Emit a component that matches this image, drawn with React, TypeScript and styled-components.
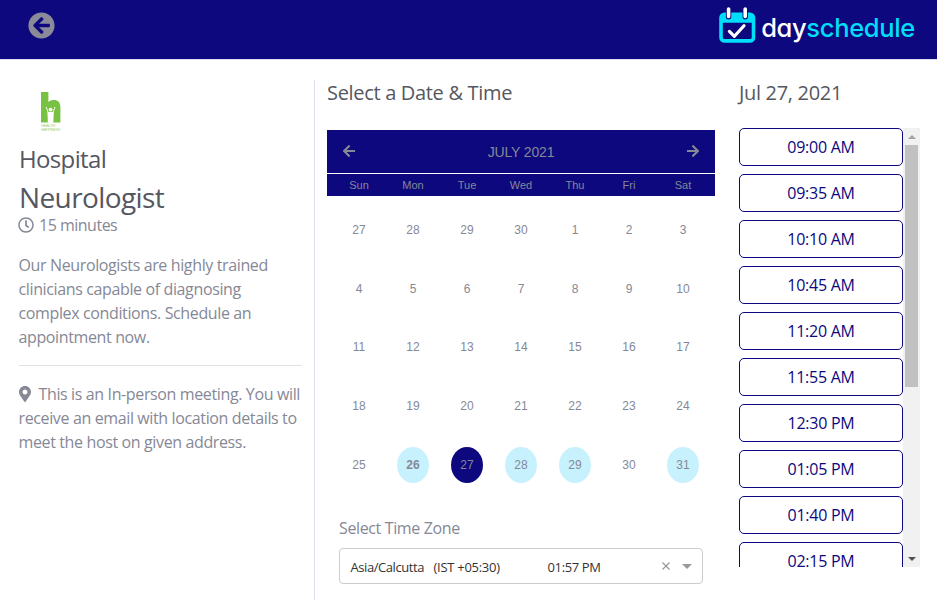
import React from "react";
import styled, { createGlobalStyle } from "styled-components";
import { FaArrowCircleLeft, FaArrowLeft, FaArrowRight, FaMapMarkerAlt, FaRegClock } from "react-icons/fa";

const NAVY = "#0d087d";
const MUTED = "#868896";
const HEADING = "#555761";
const UI_FONT = '"Open Sans", "Noto Sans", sans-serif';
const GRID_FONT = '"Liberation Sans", Arial, sans-serif';

const GlobalStyle = createGlobalStyle`
  *, *::before, *::after { box-sizing: border-box; }
  body { margin: 0; background: #fff; overflow: hidden; }
  svg { display: block; flex: none; }
`;

const Page = styled.div`
  width: 937px;
  height: 603px;
  overflow: hidden;
  color: ${MUTED};
  font: 400 16px/24px ${UI_FONT};
  letter-spacing: -0.37px;
`;

const Header = styled.header`
  display: flex;
  justify-content: space-between;
  align-items: flex-start;
  height: 60px;
  padding: 0 22px 0 28px;
  background: ${NAVY};
  border-bottom: 1px solid #dfdff0;
`;

const BackButton = styled.button`
  display: flex;
  margin: 12px 0 0;
  padding: 0;
  border: 0;
  background: none;
  color: #8a8a99;
  font-size: 27px;
`;

const Brand = styled.div`
  display: flex;
  align-items: flex-start;
  gap: 5px;
  padding-top: 7px;
`;

const Wordmark = styled.span`
  margin-top: 5px;
  color: #fff;
  font: 500 25.5px/32px Inter, sans-serif;
  font-feature-settings: "cv11";
  letter-spacing: -0.33px;
`;

const WordmarkAccent = styled.span`
  color: #00def9;
`;

const Main = styled.main`
  display: grid;
  grid-template-columns: 314px 413px 1fr;
  height: 540px;
  padding-top: 20px;
`;

const Details = styled.section`
  padding: 8px 12px 0 19px;
`;

const HostLogo = styled.div`
  display: flex;
  height: 56px;
  padding: 3px 0 0 22px;
`;

const HostName = styled.h4`
  margin: 0 0 8px;
  color: ${HEADING};
  font-size: 24px;
  font-weight: 400;
  line-height: 29px;
  letter-spacing: -0.65px;
`;

const EventName = styled.h3`
  margin: 0;
  color: ${HEADING};
  font-size: 28px;
  font-weight: 400;
  line-height: 33px;
  letter-spacing: -0.6px;
`;

const Duration = styled.div`
  display: flex;
  align-items: center;
  gap: 5px;
  margin-top: -1px;
  margin-left: -1px;
  letter-spacing: -0.5px;
`;

const Description = styled.p`
  margin: 16px 0;
  margin-left: -0.5px;
  white-space: nowrap;
`;

const Divider = styled.hr`
  height: 1px;
  margin: 0 0 16px;
  border: 0;
  background: #e1e2e6;
`;

const Location = styled.p`
  margin: 0;
  margin-left: -0.5px;
  white-space: nowrap;
`;

const LocationLine = styled.span`
  display: flex;
  align-items: center;
  gap: 8px;
`;

const PinIcon = styled(FaMapMarkerAlt)`
  width: 12px;
  height: 16px;
`;

const Picker = styled.section`
  border-left: 1px solid #dfdfef;
  padding: 0 12px;
`;

const SectionTitle = styled.h5`
  margin: 0;
  padding-top: 1px;
  color: ${HEADING};
  font-size: 20px;
  font-weight: 400;
  line-height: 24px;
  letter-spacing: -0.32px;
`;

const Calendar = styled.div`
  margin-top: 25px;
  font-family: ${GRID_FONT};
  letter-spacing: 0;
`;

const MonthBar = styled.div`
  display: flex;
  align-items: center;
  justify-content: space-between;
  height: 43px;
  padding: 0 15px;
  background: ${NAVY};
  font-size: 14px;
  letter-spacing: -0.15px;

  svg { margin-top: -2px; }
`;

const Weekdays = styled.div`
  display: grid;
  grid-template-columns: repeat(7, 54px);
  margin-top: 1px;
  padding: 0 5px;
  height: 22px;
  background: ${NAVY};
  font-size: 11px;
  line-height: 22px;
  text-align: center;
`;

const Days = styled.div`
  display: grid;
  grid-template-columns: repeat(7, 54px);
  grid-template-rows: repeat(5, 58.75px);
  place-items: center;
  padding: 4.5px 5px 0;
  height: 299px;
`;

const Day = styled.span<{ $state?: "open" | "selected"; $today?: boolean }>`
  width: 32px;
  height: 36px;
  border-radius: 50%;
  background: ${({ $state }) => ($state === "selected" ? NAVY : $state === "open" ? "#c8f1fe" : "transparent")};
  font-size: 12px;
  font-weight: ${({ $today }) => ($today ? 700 : 400)};
  line-height: 37px;
  text-align: center;
`;

const ZoneField = styled.div`
  padding: 21px 12px 0;
`;

const ZoneSelect = styled.div`
  display: flex;
  align-items: center;
  height: 36px;
  margin-top: 8px;
  padding: 2px 10px 0 10.5px;
  border: 1px solid #ccc;
  border-radius: 4px;
  color: #333;
  font-size: 13px;
  white-space: pre;
`;

const ZoneName = styled.span`
  width: 83px;
  letter-spacing: -0.43px;
`;

const ZoneOffset = styled.span`
  width: 114px;
  letter-spacing: -0.28px;
`;

const ZoneTime = styled.span`
  flex: 1;
`;

const Controls = styled.span`
  display: flex;
  align-items: center;
  gap: 12px;
  margin-top: -2px;
`;

const Times = styled.section`
  padding-left: 12px;
`;

const SlotPanel = styled.div`
  display: flex;
  width: 181px;
  height: 439px;
  margin-top: 23px;
  overflow: hidden;
`;

const SlotList = styled.div`
  display: flex;
  flex-direction: column;
  gap: 8px;
  width: 164px;
`;

const Slot = styled.button`
  flex: none;
  height: 38px;
  padding: 0;
  border: 1px solid ${NAVY};
  border-radius: 5px;
  background: #fff;
  color: ${NAVY};
  font: 400 16px/24px ${UI_FONT};
  letter-spacing: -0.25px;
`;

const Scrollbar = styled.div`
  display: flex;
  flex-direction: column;
  align-items: center;
  width: 17px;
  background: #f1f1f1;
`;

const ScrollArrow = styled.span`
  display: flex;
  align-items: center;
  justify-content: center;
  width: 17px;
  height: 17px;
`;

const Thumb = styled.div`
  width: 13px;
  height: 242px;
  margin-bottom: auto;
  background: #c1c1c1;
`;

const WEEKDAYS = ["Sun", "Mon", "Tue", "Wed", "Thu", "Fri", "Sat"];
const DATES = [27, 28, 29, 30, ...Array.from({ length: 31 }, (_, i) => i + 1)];
const OPEN_DATES = [26, 28, 29, 31];
const SLOTS = ["09:00 AM", "09:35 AM", "10:10 AM", "10:45 AM", "11:20 AM", "11:55 AM", "12:30 PM", "01:05 PM", "01:40 PM", "02:15 PM"];

// The first row holds the tail of June, so only the last week can be open.
const stateOf = (date: number, index: number) => {
  if (index < 28) return undefined;
  if (date === 27) return "selected" as const;
  return OPEN_DATES.includes(date) ? ("open" as const) : undefined;
};

const BrandIcon = () => (
  <svg width="37" height="36" viewBox="0 0 37 36" fill="none">
    <rect x="2" y="7.3" width="32.5" height="26.6" rx="3.5" stroke="#00def9" strokeWidth="3.6" />
    <path d="M2 8h32.5v7.8H2z" fill="#00def9" />
    <path d="M9.6 2.5v7.2M26.2 2.5v7.2" stroke={NAVY} strokeWidth="5.4" strokeLinecap="round" />
    <path d="M9.6 2v7.500M26.2 2v7.500" stroke="#fff" strokeWidth="3.6" strokeLinecap="round" />
    <path d="M10.4 24.4l5 4.900 9.600-10.600" stroke="#fff" strokeWidth="3.200" strokeLinecap="round" strokeLinejoin="round" />
  </svg>
);

const HospitalIcon = () => (
  <svg width="20" height="41" viewBox="0 0 20 41">
    <path d="M0 1h7.400v10C9 9.600 11 9 13 9c4 0 6.400 2.600 6.400 7v15.500H0z" fill="#78c143" />
    <circle cx="9.600" cy="18.600" r="1.900" fill="#fff" />
    <path d="M5.200 16l1.800 5 .3 10.500h4.600l.3-10.500 1.800-5" fill="none" stroke="#fff" strokeWidth="0.900" />
    <path d="M6.700 21h5.800l-.6 10.500H7.300z" fill="#fff" />
    <g fill="#a3d384" fontFamily="Liberation Sans" fontSize="4">
      <text x="0" y="36" textLength="14" lengthAdjust="spacingAndGlyphs">HEALTH</text>
      <text x="0" y="40" textLength="19" lengthAdjust="spacingAndGlyphs">HAPPINESS</text>
    </g>
  </svg>
);

export default function App() {
  return (
    <Page>
      <GlobalStyle />
      <Header>
        <BackButton aria-label="Back"><FaArrowCircleLeft /></BackButton>
        <Brand>
          <BrandIcon />
          <Wordmark>day<WordmarkAccent>schedule</WordmarkAccent></Wordmark>
        </Brand>
      </Header>
      <Main>
        <Details>
          <HostLogo><HospitalIcon /></HostLogo>
          <HostName>Hospital</HostName>
          <EventName>Neurologist</EventName>
          <Duration><FaRegClock />15 minutes</Duration>
          <Description>
            Our Neurologists are highly trained<br />
            clinicians capable of diagnosing<br />
            complex conditions. Schedule an<br />
            appointment now.
          </Description>
          <Divider />
          <Location>
            <LocationLine><PinIcon />This is an In-person meeting. You will</LocationLine>
            receive an email with location details to<br />
            meet the host on given address.
          </Location>
        </Details>
        <Picker>
          <SectionTitle>Select a Date &amp; Time</SectionTitle>
          <Calendar>
            <MonthBar>
              <FaArrowLeft />
              <span>JULY 2021</span>
              <FaArrowRight />
            </MonthBar>
            <Weekdays>{WEEKDAYS.map((name) => <span key={name}>{name}</span>)}</Weekdays>
            <Days>
              {DATES.map((date, index) => (
                <Day key={index} $state={stateOf(date, index)} $today={date === 26}>{date}</Day>
              ))}
            </Days>
          </Calendar>
          <ZoneField>
            Select Time Zone
            <ZoneSelect>
              <ZoneName>Asia/Calcutta</ZoneName>
              <ZoneOffset>(IST +05:30)</ZoneOffset>
              <ZoneTime>01:57 PM</ZoneTime>
              <Controls>
                <svg width="8" height="8" viewBox="0 0 8 8" stroke="#999" strokeWidth="1.2"><path d="M.5.5l7 7M7.500.5l-7 7" /></svg>
                <svg width="10" height="5" viewBox="0 0 10 5" fill="#999"><path d="M0 0h10L5 5z" /></svg>
              </Controls>
            </ZoneSelect>
          </ZoneField>
        </Picker>
        <Times>
          <SectionTitle>Jul 27, 2021</SectionTitle>
          <SlotPanel>
            <SlotList>{SLOTS.map((time) => <Slot key={time}>{time}</Slot>)}</SlotList>
            <Scrollbar>
              <ScrollArrow><svg width="8" height="4" viewBox="0 0 8 4" fill="#a3a3a3"><path d="M0 4h8L4 0z" /></svg></ScrollArrow>
              <Thumb />
              <ScrollArrow><svg width="8" height="4" viewBox="0 0 8 4" fill="#505050"><path d="M0 0h8L4 4z" /></svg></ScrollArrow>
            </Scrollbar>
          </SlotPanel>
        </Times>
      </Main>
    </Page>
  );
}
